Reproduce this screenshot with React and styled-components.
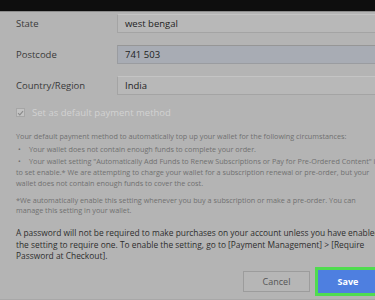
import React from 'react';
import styled, { createGlobalStyle } from 'styled-components';

const GlobalStyle = createGlobalStyle`
  html, body {
    margin: 0;
    padding: 0;
    background: #b4b4b4;
  }
  body {
    font-family: "Open Sans", "Noto Sans", sans-serif;
  }
`;

const fields = [
  { label: 'State', value: 'west bengal' },
  { label: 'Postcode', value: '741 503', focused: true },
  { label: 'Country/Region', value: 'India' },
];

const App = () => {
  return (
    <Page>
      <GlobalStyle />
      <TopBar />
      <Form>
        {fields.map((f) => (
          <FieldRow key={f.label}>
            <Label>{f.label}</Label>
            <Input $focused={f.focused}>{f.value}</Input>
          </FieldRow>
        ))}

        <CheckRow>
          <Check>
            <svg viewBox="0 0 10 10" width="8" height="8">
              <path d="M1.5 5.2 L4 7.6 L8.6 2.2" fill="none" stroke="#8a8a8a" strokeWidth="1.6" />
            </svg>
          </Check>
          <CheckLabel>Set as default payment method</CheckLabel>
        </CheckRow>

        <Info>
          <p>Your default payment method to automatically top up your wallet for the following circumstances:</p>
          <Bullet $gap={2}>
            <span>•</span>Your wallet does not contain enough funds to complete your order.
          </Bullet>
          <Bullet $gap={1}>
            <span>•</span>Your wallet setting "Automatically Add Funds to Renew Subscriptions or Pay for Pre-Ordered Content" is
          </Bullet>
          <p>
            to set enable.* We are attempting to charge your wallet for a subscription renewal or pre-order, but your
            <br />
            wallet does not contain enough funds to cover the cost.
          </p>
          <Note>
            *We automatically enable this setting whenever you buy a subscription or make a pre-order. You can
            <br />
            manage this setting in your wallet.
          </Note>
        </Info>

        <Notice>
          A password will not be required to make purchases on your account unless you have enabled
          <br />
          the setting to require one. To enable the setting, go to [Payment Management] &gt; [Require
          <br />
          Password at Checkout].
        </Notice>
      </Form>

      <Footer>
        <Button type="button">Cancel</Button>
        <Button type="button" $primary>
          Save
        </Button>
      </Footer>
    </Page>
  );
};

export default App;

const Page = styled.div`
  width: 375px;
  height: 300px;
  overflow: hidden;
  background: #b4b4b4;
  display: flex;
  flex-direction: column;
`;

const TopBar = styled.div`
  height: 11px;
  flex-shrink: 0;
  background: #0e0e0e;
  border-bottom: 1px solid #8c8c8c;
`;

const Form = styled.div`
  padding: 0 0 0 16px;
  display: flex;
  flex-direction: column;
`;

const FieldRow = styled.div`
  display: grid;
  grid-template-columns: 101px 300px;
  align-items: center;
  height: 20px;
  margin-top: 11px;

  &:first-child {
    margin-top: 1px;
  }
`;

const Label = styled.div`
  font-size: 9.5px;
  color: #3a3a3a;
`;

const Input = styled.div`
  height: 19px;
  box-sizing: border-box;
  padding: 0 7px;
  display: flex;
  align-items: center;
  font-size: 9.5px;
  color: #1e1e1e;
  background: ${(p) => (p.$focused ? '#a8acb4' : '#b8b8b8')};
  border: 1px solid ${(p) => (p.$focused ? '#9a9ca0' : '#a4a4a4')};
  border-top-color: ${(p) => (p.$focused ? '#969696' : '#c4c4c4')};
`;

const CheckRow = styled.div`
  display: flex;
  align-items: center;
  gap: 7px;
  margin-top: 11px;
`;

const Check = styled.div`
  width: 9px;
  height: 9px;
  box-sizing: border-box;
  border: 1px solid #a6a6a6;
  background: #c2c2c2;
  display: flex;
  align-items: center;
  justify-content: center;
`;

const CheckLabel = styled.div`
  font-size: 9.5px;
  color: #d2d2d2;
`;

const Info = styled.div`
  margin-top: 12px;
  font-size: 7.25px;
  line-height: 11px;
  color: #707070;
  white-space: nowrap;

  p {
    margin: 0;
  }
`;

const Bullet = styled.p`
  && {
    margin-top: ${(p) => p.$gap}px;
  }

  span {
    display: inline-block;
    width: 11px;
    margin-left: 2px;
  }
`;

const Note = styled.p`
  && {
    margin-top: 6px;
  }
  line-height: 10px;
`;

const Notice = styled.p`
  margin: 12px 0 0;
  font-size: 8.4px;
  line-height: 11.5px;
  color: #2e2e2e;
  white-space: nowrap;
`;

const Footer = styled.div`
  margin-top: auto;
  display: flex;
  justify-content: flex-end;
  align-items: center;
  gap: 5px;
  padding: 0 0 3px;
  border-bottom: 1px solid #a8a8a8;
`;

const Button = styled.button`
  font-family: inherit;
  font-size: 9px;
  box-sizing: border-box;
  cursor: pointer;
  height: ${(p) => (p.$primary ? '29px' : '21px')};
  width: ${(p) => (p.$primary ? '66px' : '67px')};
  margin-right: ${(p) => (p.$primary ? '-6px' : '0')};
  border: ${(p) => (p.$primary ? '3px solid #4fdc4f' : '1px solid #9c9c9c')};
  background: ${(p) => (p.$primary ? '#4e7fe0' : '#b6b6b6')};
  color: ${(p) => (p.$primary ? '#ffffff' : '#555555')};
  font-weight: ${(p) => (p.$primary ? 700 : 400)};
  padding: 0;
`;
